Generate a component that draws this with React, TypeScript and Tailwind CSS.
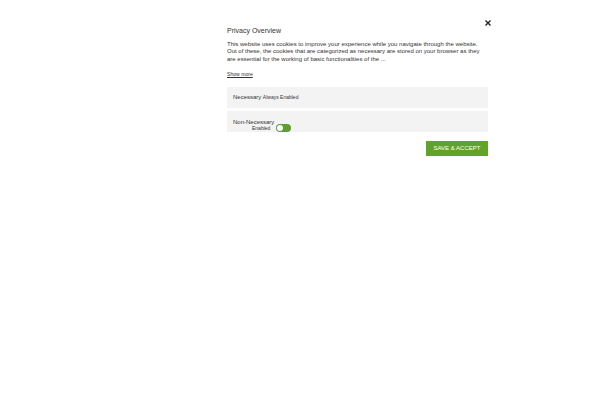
import React from "react";

export default function App() {
  return (
    <div className="w-[600px] h-[400px] bg-white font-['Liberation_Sans',Arial,sans-serif] text-[#333333]">
      <div className="relative ml-[227px] w-[261px] pt-[26px]">
        {/* close */}
        <button className="absolute right-[-3px] top-[20px] w-[6px] h-[6px]">
          <svg viewBox="0 0 6 6" className="w-[6px] h-[6px] block">
            <path d="M0.5 0.5 L5.5 5.5 M5.5 0.5 L0.5 5.5" stroke="#222" strokeWidth="1.4" />
          </svg>
        </button>
        <h2 className="text-[7px] leading-[10px]">Privacy Overview</h2>
        <p className="text-[6px] leading-[7.5px] mt-[4.5px]">
          This website uses cookies to improve your experience while you navigate through the website. Out of these, the cookies that are categorized as necessary are stored on your browser as they are essential for the working of basic functionalities of the ...
        </p>
        <a className="block text-[5.1px] leading-[6px] underline mt-[8px]">Show more</a>
        <div className="mt-[10px] flex flex-col gap-[3px]">
          <div className="h-[21px] bg-[#f3f3f3] flex items-center px-[6px]">
            <span className="text-[6px]">Necessary</span>
            <span className="text-[5px] ml-[1.5px] mt-[1px]">Always Enabled</span>
          </div>
          <div className="h-[21px] bg-[#f3f3f3] flex items-start px-[6px] pt-[8px]">
            <div className="flex flex-col items-end">
              <span className="text-[6px] leading-[6px]">Non-Necessary</span>
              <span className="text-[5px] leading-[6px] mr-[4px]">Enabled</span>
            </div>
            <div className="ml-[2px] mt-[5px] w-[15px] h-[8px] rounded-full bg-[#5b9f2d] flex items-center pl-[1px]">
              <div className="w-[6px] h-[6px] rounded-full bg-white" />
            </div>
          </div>
        </div>
        <div className="flex justify-end mt-[9px]">
          <button className="h-[15px] w-[62px] bg-[#61a229] text-white text-[6px]">SAVE &amp; ACCEPT</button>
        </div>
      </div>
    </div>
  );
}
